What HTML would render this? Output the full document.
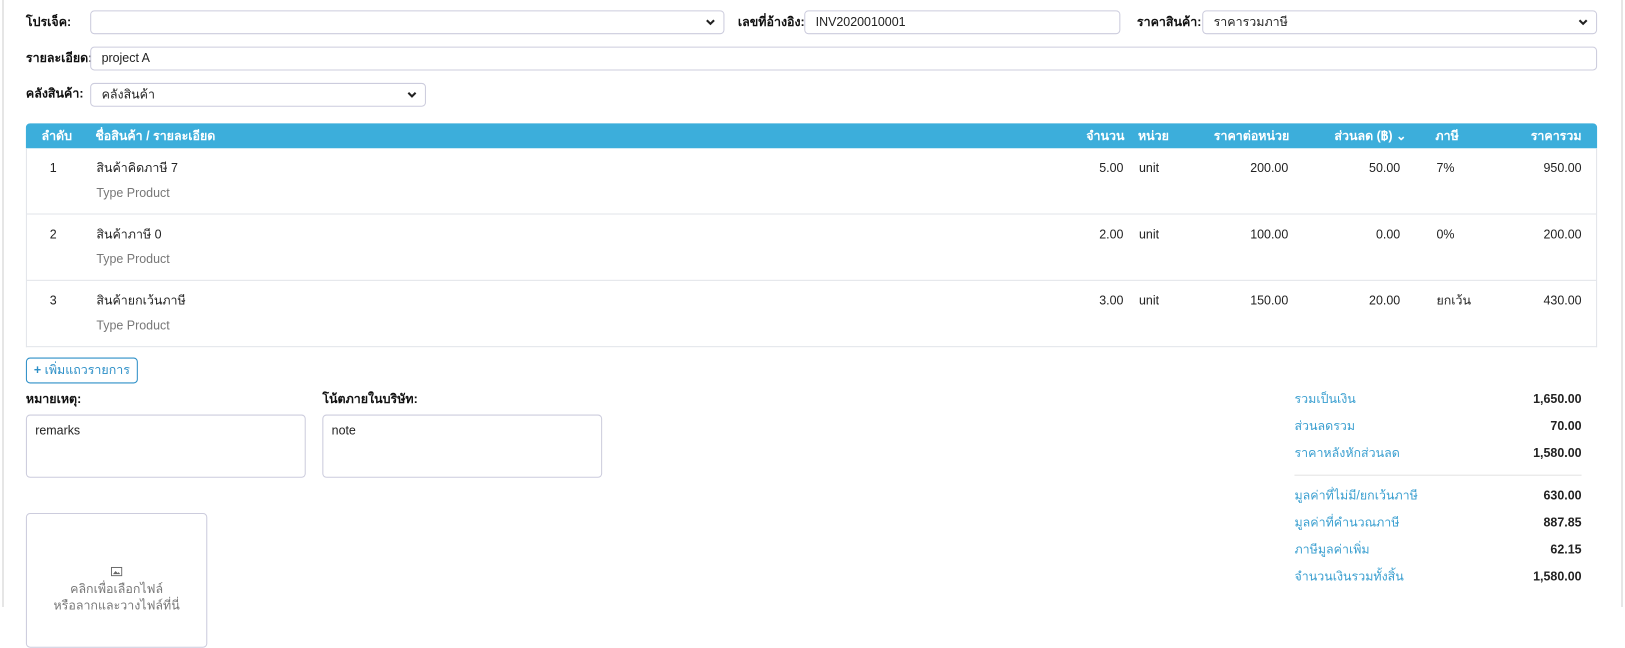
<!DOCTYPE html>
<html><head><meta charset="utf-8"><style>
*{box-sizing:border-box;margin:0;padding:0}
body{width:1625px;height:607px;overflow:hidden;background:#fff;font-family:"Liberation Sans","Noto Sans CJK SC",sans-serif;font-size:12px;color:#222;position:relative}
#w{position:absolute;left:0;top:0;width:1568px;height:586px;transform:scale(1.0364);transform-origin:0 0}
.a{position:absolute;line-height:16px}
.lbl{font-weight:bold;font-size:12px;color:#111}
.inp{position:absolute;border:1px solid #ccd;border-radius:4px;background:#fff;padding-left:10px;line-height:21px;font-size:12px;color:#222}
.chev{position:absolute;right:8px;top:7px;width:9px;height:7px}
.hd{position:absolute;left:25px;top:119px;width:1516px;height:24px;background:#3caedb;border-radius:4px 4px 0 0;color:#fff;font-weight:bold}
.hd span,.row span{position:absolute;top:4px;line-height:16px}
.tb{position:absolute;left:25px;top:143px;width:1516px;height:192px;border:1px solid #e2e5ea;border-top:none}
.row{position:absolute;left:0;width:1514px;height:64px;border-bottom:1px solid #e2e5ea}
.row span{top:11px}
.row .t{top:35px;color:#777}
.sl{position:absolute;left:1249px;color:#3a9fd0;font-size:12px;line-height:16px}
.sv{position:absolute;right:42px;font-weight:bold;font-size:12px;line-height:16px}
.ta{position:absolute;border:1px solid #ccd;border-radius:4px;padding:6px 8px;font-size:12px;line-height:16px}
</style></head><body>
<div style="position:absolute;left:2px;top:0;width:2px;height:607px;background:#e6e6e6"></div>
<div style="position:absolute;left:1621px;top:0;width:2px;height:607px;background:#e6e6e6"></div>
<div id="w">
<div class="a lbl" style="left:25px;top:13px">โปรเจ็ค:</div>
<div class="inp" style="left:87px;top:10px;width:612px;height:23px"><svg class="chev" viewBox="0 0 9 7"><path d="M1 1.5 L4.5 5 L8 1.5" stroke="#222" stroke-width="2" fill="none"/></svg></div>
<div class="a lbl" style="left:712px;top:13px">เลขที่อ้างอิง:</div>
<div class="inp" style="left:776px;top:10px;width:305px;height:23px">INV2020010001</div>
<div class="a lbl" style="left:1097px;top:13px">ราคาสินค้า:</div>
<div class="inp" style="left:1160px;top:10px;width:381px;height:23px">ราคารวมภาษี<svg class="chev" viewBox="0 0 9 7"><path d="M1 1.5 L4.5 5 L8 1.5" stroke="#222" stroke-width="2" fill="none"/></svg></div>

<div class="a lbl" style="left:25px;top:48px">รายละเอียด:</div>
<div class="inp" style="left:87px;top:45px;width:1454px;height:23px">project A</div>

<div class="a lbl" style="left:25px;top:82px">คลังสินค้า:</div>
<div class="inp" style="left:87px;top:80px;width:324px;height:23px">คลังสินค้า<svg class="chev" viewBox="0 0 9 7"><path d="M1 1.5 L4.5 5 L8 1.5" stroke="#222" stroke-width="2" fill="none"/></svg></div>

<div class="hd">
<span style="left:15px">ลำดับ</span>
<span style="left:67px">ชื่อสินค้า / รายละเอียด</span>
<span style="right:456px">จำนวน</span>
<span style="left:1073px">หน่วย</span>
<span style="right:297px">ราคาต่อหน่วย</span>
<span style="right:184px">ส่วนลด (฿) &#8964;</span>
<span style="left:1360px">ภาษี</span>
<span style="right:15px">ราคารวม</span>
</div>
<div class="tb">
<div class="row" style="top:0">
<span style="left:22px">1</span><span style="left:67px">สินค้าคิดภาษี 7</span><span class="t" style="left:67px">Type Product</span>
<span style="right:456px">5.00</span><span style="left:1073px">unit</span><span style="right:297px">200.00</span><span style="right:189px">50.00</span><span style="left:1360px">7%</span><span style="right:14px">950.00</span></div>
<div class="row" style="top:64px">
<span style="left:22px">2</span><span style="left:67px">สินค้าภาษี 0</span><span class="t" style="left:67px">Type Product</span>
<span style="right:456px">2.00</span><span style="left:1073px">unit</span><span style="right:297px">100.00</span><span style="right:189px">0.00</span><span style="left:1360px">0%</span><span style="right:14px">200.00</span></div>
<div class="row" style="top:128px;border-bottom:none">
<span style="left:22px">3</span><span style="left:67px">สินค้ายกเว้นภาษี</span><span class="t" style="left:67px">Type Product</span>
<span style="right:456px">3.00</span><span style="left:1073px">unit</span><span style="right:297px">150.00</span><span style="right:189px">20.00</span><span style="left:1360px">ยกเว้น</span><span style="right:14px">430.00</span></div>
</div>

<div class="a" style="left:25px;top:345px;width:108px;height:25px;border:1px solid #2c8fc7;border-radius:4px;color:#2c8fc7;line-height:23px;text-align:center"><b>+</b> เพิ่มแถวรายการ</div>

<div class="a lbl" style="left:25px;top:377px">หมายเหตุ:</div>
<div class="ta" style="left:25px;top:400px;width:270px;height:61px">remarks</div>
<div class="a lbl" style="left:311px;top:377px">โน้ตภายในบริษัท:</div>
<div class="ta" style="left:311px;top:400px;width:270px;height:61px">note</div>

<div class="a" style="left:25px;top:495px;width:175px;height:130px;border:1px solid #ccd;border-radius:4px;text-align:center;color:#777">
<svg style="margin-top:51px" width="11" height="9" viewBox="0 0 11 9"><rect x="0.5" y="0.5" width="10" height="8" fill="none" stroke="#666"/><path d="M2 7 L4.5 4 L6.5 6 L7.5 5 L9 7Z" fill="#666"/></svg>
<div style="line-height:16px">คลิกเพื่อเลือกไฟล์</div>
<div style="line-height:16px">หรือลากและวางไฟล์ที่นี่</div>
</div>

<div class="sl" style="top:377px">รวมเป็นเงิน</div><div class="sv" style="top:377px">1,650.00</div>
<div class="sl" style="top:403px">ส่วนลดรวม</div><div class="sv" style="top:403px">70.00</div>
<div class="sl" style="top:429px">ราคาหลังหักส่วนลด</div><div class="sv" style="top:429px">1,580.00</div>
<div style="position:absolute;left:1249px;top:458px;width:277px;height:1px;background:#e3e3e3"></div>
<div class="sl" style="top:470px">มูลค่าที่ไม่มี/ยกเว้นภาษี</div><div class="sv" style="top:470px">630.00</div>
<div class="sl" style="top:496px">มูลค่าที่คำนวณภาษี</div><div class="sv" style="top:496px">887.85</div>
<div class="sl" style="top:522px">ภาษีมูลค่าเพิ่ม</div><div class="sv" style="top:522px">62.15</div>
<div class="sl" style="top:548px">จำนวนเงินรวมทั้งสิ้น</div><div class="sv" style="top:548px">1,580.00</div>
</div>
</body></html>
